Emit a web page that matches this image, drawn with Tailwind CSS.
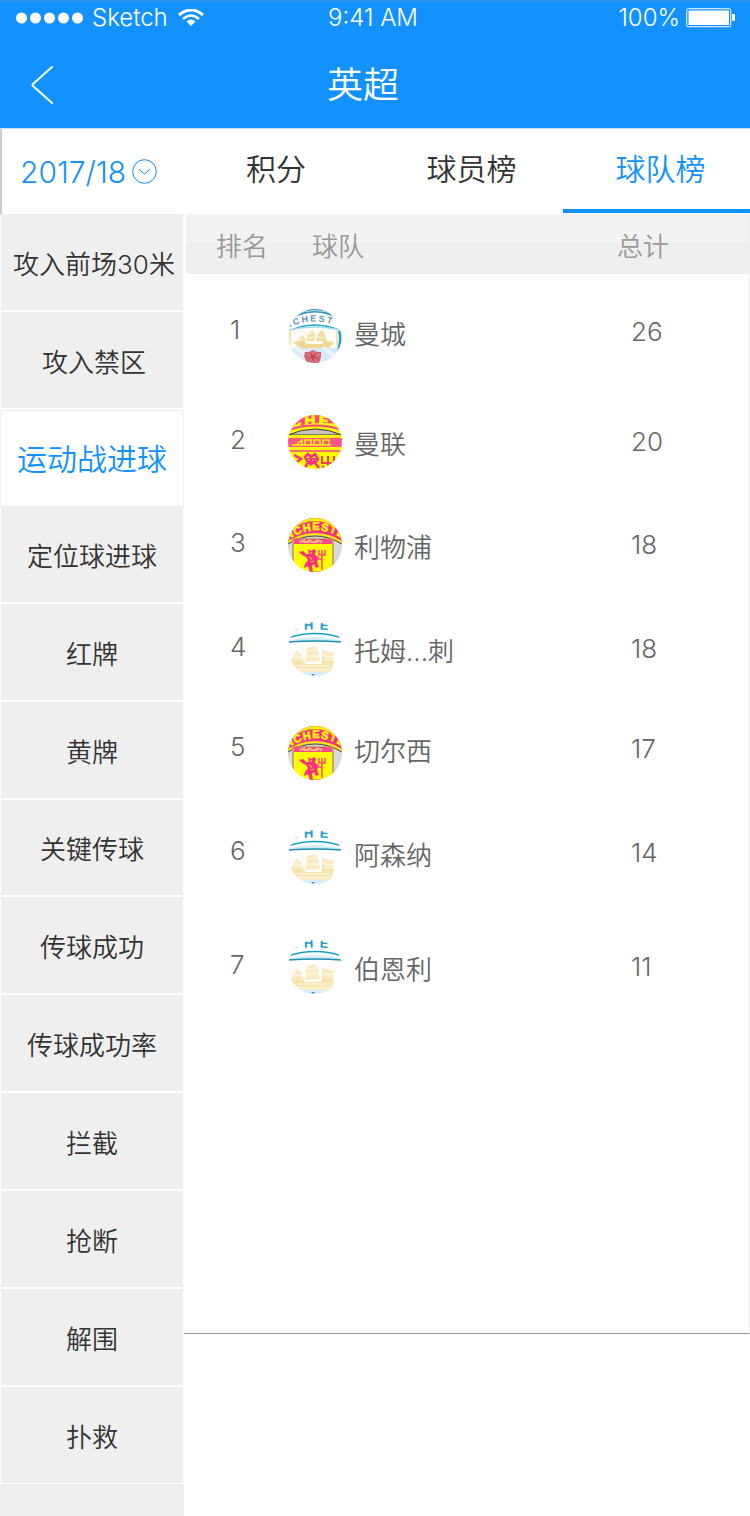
<!DOCTYPE html>
<html lang="zh-CN">
<head>
<meta charset="utf-8">
<meta name="viewport" content="width=device-width, initial-scale=1">
<title>英超</title>
<script src="https://cdn.jsdelivr.net/npm/@tailwindcss/browser@4"></script>
</head>
<body class="flex min-h-screen flex-col bg-white font-['Inter','Noto_Sans_CJK_SC',sans-serif] font-[350] text-[#333]">

<!-- Shared badge drawings -->
<svg class="absolute size-0" aria-hidden="true">
  <defs>
    <path id="arcCity" d="M-2 20Q27 5 56 20"/>
    <path id="arcCityBig" d="M-4 11Q27 4 60 11"/>
    <path id="arcUnited" d="M-3 24Q27 2 57 22"/>
    <path id="arcUnitedBig" d="M-4 14Q27 6 64 16"/>
    <g id="ship">
      <path d="M8 33L12 29L14 26L17 29L17 33ZM18 32L20 26L24 21L27 25L26 32ZM28 32L30 25L34 20L38 27L39 33Z" fill="#f6dda0"/>
      <path d="M5 33H17L19 35H34L36 32L46 33L41 39H12Z" fill="#f1d78f"/>
      <path d="M10 31L15 30M20 29L26 28M30 28L38 29M21 25L25 24" stroke="#fffaf0" stroke-width="1" fill="none"/>
    </g>
    <symbol id="city" viewBox="0 0 54 54">
      <path d="M0 0H54V54H0Z" fill="#fff"/>
      <path d="M0 12Q27 -5 54 12V6Q27 -12 0 6Z" fill="#2c93b8"/>
      <path d="M6 6Q27 -3 48 6" stroke="#b8e3f3" stroke-width="1" fill="none"/>
      <text font-size="9" font-weight="700" font-family="Liberation Sans" fill="#5d93ba" letter-spacing="2"><textPath href="#arcCity">NCHEST</textPath></text>
      <path d="M1 22Q27 10 53 22" stroke="#17a0c9" stroke-width="1.5" fill="none"/>
      <path d="M0 21Q27 14 53 21L51 41Q47 54 27 54Q6 54 1 40Z" fill="#fffdf6"/>
      <path d="M1 21Q27 15 52 21" stroke="#9edaf0" stroke-width="1.5" fill="none"/>
      <path d="M51 22Q54 30 50 42" stroke="#17a0c9" stroke-width="2.500" fill="none"/>
      <path d="M2 22V37M49 22V39" stroke="#f1dca0" stroke-width="1.500"/>
      <use href="#ship"/>
      <path d="M1 39H50Q46 54 27 54Q5 54 1 39Z" fill="#d5e9f8"/>
      <path d="M2 43L18 54M7 38L19 46M35 38L47 48" stroke="#e9f4fc" stroke-width="4"/>
      <path d="M25 41L29 43L33 43L33 48L31 54H19L16 47L17 43L21 43Z" fill="#d5626f"/>
      <circle cx="25" cy="48" r="3" fill="#bf4858"/>
      <path d="M25 42V46M18 45L23 47M32 45L27 47M21 53L24 49M29 53L26 49" stroke="#e88b95" stroke-width="1"/>
    </symbol>
    <symbol id="cityBig" viewBox="0 0 54 54">
      <path d="M0 0H54V54H0Z" fill="#fff"/>
      <text font-size="13" font-weight="700" font-family="Liberation Sans" fill="#17a0c9" letter-spacing="6"><textPath href="#arcCityBig" startOffset="5">CHES</textPath></text>
      <path d="M0 16Q27 7 54 16" stroke="#12a0c8" stroke-width="1.500" fill="none"/>
      <path d="M0 19Q27 11 54 19V20H0Z" fill="#d3eefa"/>
      <path d="M0 20Q27 18 54 20" stroke="#238eb0" stroke-width="1.500" fill="none"/>
      <path d="M1 40L5 35L7 31L13 31L16 40ZM6 30L10 29L12 32ZM17 40L18 32L19 26L27 24L30 28L31 33L32 39ZM33 39Q36 36 35 28L47 31Q44 35 46 40Z" fill="#faebc4"/>
      <path d="M2 40H15L18 42H33L35 39H46L44 47H9Z" fill="#f7e3ae"/>
      <path d="M5 35L14 36M18 29L29 28M17 34L31 34M36 34L44 35M10 44H42" stroke="#fffaf0" stroke-width="1"/>
      <path d="M35 28V42M10 36V43" stroke="#f3dda4" stroke-width="1"/>
      <path d="M7 46H46L43 50H10Z" fill="#fbedc5"/>
      <path d="M9 50H45L35 54H20Z" fill="#d9edfa"/>
      <path d="M23 52H27L25 54Z" fill="#3f91cc"/>
    </symbol>
    <symbol id="united" viewBox="0 0 54 54">
      <path d="M0 0H54V54H0Z" fill="#d8d8d8"/>
      <path d="M0 0H54V25Q27 9 0 25Z" fill="#ff2f82"/>
      <path d="M3 10Q27 -7 51 10" stroke="#fff000" stroke-width="3" fill="none"/>
      <text font-size="11" font-weight="700" font-family="Liberation Sans" fill="#fff600" stroke="#fff600" stroke-width=".6" letter-spacing="1"><textPath href="#arcUnited" startOffset="3">NCHESTE</textPath></text>
      <path d="M0 24Q27 8 54 24" stroke="#fff000" stroke-width="2" fill="none"/>
      <path d="M0 26Q27 10 54 26" stroke="#4b412c" stroke-width="1" fill="none"/>
      <path d="M5 21H45V54H5Z" fill="#fffb00" stroke="#b59b57" stroke-width="1.5"/>
      <path d="M6 21H44V26H6Z" fill="#ff4c89"/>
      <path d="M12 24L16 22V24H21V22L24 24H29V22L34 24" stroke="#ffd07a" stroke-width="1.500" fill="none"/>
      <path d="M11 34L15 33L18 36L21 36L20 31L23 33L26 31L28 33L27 37L31 39L29 44L31 49L28 50L26 46L24 48L25 54H22L20 48L16 50L17 46L20 42L18 39L14 37Z" fill="#ff2f82"/>
      <path d="M31 32V37H37V32M34 32V52M29 40L34 42" stroke="#ff4c70" stroke-width="1.5" fill="none"/>
      <path d="M21 39L24 41M22 35H24M23 44L26 43" stroke="#fffb00" stroke-width="1"/>
    </symbol>
    <symbol id="unitedBig" viewBox="0 0 54 54">
      <path d="M0 0H54V54H0Z" fill="#fff900"/>
      <path d="M5 0H49V9Q27 6 2 13Z" fill="#ff4386"/>
      <text font-size="15" font-weight="700" font-family="Liberation Sans" fill="#fff900" stroke="#fff900" stroke-width="1" letter-spacing="3"><textPath href="#arcUnitedBig" startOffset="7">CHES</textPath></text>
      <path d="M0 15Q27 6 54 15" stroke="#ff4386" stroke-width="2" fill="none"/>
      <path d="M0 20Q27 8 54 20Z" fill="#c7c3b8" stroke="#3d382d" stroke-width="1"/>
      <path d="M0 20H54V22H0Z" fill="#fff000"/>
      <path d="M0 23H54V32H0Z" fill="#ff5588"/>
      <path d="M4 30H43M8 30L14 25V30M17 30V25H23V30M26 30V25H32V30M35 30V25H41V30" stroke="#fff600" stroke-width="1.5" fill="none"/>
      <path d="M0 36H54" stroke="#ff4386" stroke-width="1.5"/>
      <path d="M6 40L13 44L9 47M17 53L20 47L17 42L20 39L23 42L27 39L30 44L27 48L31 53" stroke="#ff2f82" stroke-width="2.5" fill="none"/>
      <path d="M18 43H28V47L23 51L19 48Z" fill="#ff2f82"/>
      <path d="M20 44L22 46M26 44L24 46" stroke="#fff900"/>
      <path d="M34 41V48H46V41M40 41V53M34 51L38 54" stroke="#ef4353" stroke-width="2" fill="none"/>
    </symbol>
  </defs>
</svg>

<header class="h-32 border-t border-[#3d8fdb] bg-[#1291ff] text-white">
  <div class="grid h-[34px] grid-cols-[1fr_auto_1fr] items-center pr-[14px] pl-4 text-2xl leading-[34px] font-light">
    <div class="flex items-center">
      <svg class="h-3 w-[68px]" viewBox="0 0 68 12" fill="#fff" aria-hidden="true"><circle cx="5.5" cy="6" r="5.5"/><circle cx="19.5" cy="6" r="5.5"/><circle cx="33.5" cy="6" r="5.5"/><circle cx="47.5" cy="6" r="5.5"/><circle cx="61.5" cy="6" r="5.5"/></svg>
      <span class="ml-2">Sketch</span>
      <svg class="ml-[10px] h-[18px] w-[26px]" viewBox="0 0 26 18" fill="none" stroke="#fff" aria-hidden="true"><path d="M1 6Q13 -4 25 6" stroke-width="3"/><path d="M5 10Q13 3 21 10" stroke-width="2.5"/><path d="M8.500 12.500Q13 8.500 17.500 12.500L13 17Z" fill="#fff" stroke="none"/></svg>
    </div>
    <span class="pr-[6px]">9:41 AM</span>
    <div class="flex items-center justify-end">
      <span>100%</span>
      <svg class="ml-[6px] h-5 w-[50px]" viewBox="0 0 50 20" aria-hidden="true"><rect x=".75" y=".75" width="44" height="18" rx="1.500" fill="none" stroke="#fff" stroke-width="1"/><rect x="2.500" y="2.500" width="40.500" height="14.500" fill="#fff"/><path d="M46 6H48Q49 6 49 7V12Q49 13 48 13H46Z" fill="#fff"/></svg>
    </div>
  </div>
  <div class="grid h-[93px] grid-cols-[1fr_auto_1fr] items-center pt-[6px] pr-[54px] pl-[30px]">
    <a href="#" aria-label="返回"><svg class="h-10 w-6" viewBox="0 0 24 40" fill="none" stroke="#fff" stroke-width="2" stroke-linecap="round" stroke-linejoin="round"><path d="M22 2L3 19Q2 20 3 21L22 38"/></svg></a>
    <h1 class="text-4xl leading-10">英超</h1>
  </div>
</header>

<nav class="flex h-[86px] border-t border-[#c3e2fd]">
  <div class="flex w-[184px] shrink-0 items-center border-l-2 border-[#ccc] pl-[18px] text-[#1291ff]">
    <label for="season" class="sr-only">赛季</label>
    <select id="season" class="h-14 w-[112px] appearance-none overflow-visible bg-transparent p-0 text-3xl leading-[56px]"><option>2017/18</option></select>
    <svg class="size-[25px] shrink-0" viewBox="0 0 25 25" fill="none" stroke="#1291ff" aria-hidden="true"><circle cx="12.500" cy="12.500" r="11.800"/><path d="M7 10L12.500 15L18 10"/></svg>
  </div>
  <div class="grid flex-1 grid-cols-[184px_1fr_187px] pb-px text-3xl">
    <button class="border-b-4 border-transparent">积分</button>
    <button class="border-b-4 border-transparent pl-3">球员榜</button>
    <button class="border-b-4 border-[#1291ff] pl-2 text-[#1291ff]">球队榜</button>
  </div>
</nav>

<main class="flex flex-1 items-stretch">
  <aside class="flex w-[184px] shrink-0 flex-col text-[26px]">
    <button class="h-[98px] border-x border-b-2 border-white bg-[#efefef] pt-1 pl-1">攻入前场30米</button>
    <button class="h-[98px] border-x border-b-2 border-white bg-[#efefef] pt-1 pl-1">攻入禁区</button>
    <button class="h-[97px] border border-[#efefef] bg-white text-3xl text-[#1291ff]">运动战进球</button>
    <button class="h-[97px] border-x border-b-2 border-white bg-[#efefef] pt-1">定位球进球</button>
    <button class="h-[98px] border-x border-b-2 border-white bg-[#efefef] pt-1">红牌</button>
    <button class="h-[98px] border-x border-b-2 border-white bg-[#efefef] pt-1">黄牌</button>
    <button class="h-[97px] border-x border-b-2 border-white bg-[#efefef] pt-1">关键传球</button>
    <button class="h-[98px] border-x border-b-2 border-white bg-[#efefef] pt-1">传球成功</button>
    <button class="h-[98px] border-x border-b-2 border-white bg-[#efefef] pt-1">传球成功率</button>
    <button class="h-[98px] border-x border-b-2 border-white bg-[#efefef] pt-1">拦截</button>
    <button class="h-[98px] border-x border-b-2 border-white bg-[#efefef] pt-1">抢断</button>
    <button class="h-[98px] border-x border-b-2 border-white bg-[#efefef] pt-1">解围</button>
    <button class="h-[97px] border-x border-b border-white bg-[#efefef] pt-1">扑救</button>
    <div class="flex-1 bg-[#efefef]"></div>
  </aside>

  <section class="min-h-[1120px] flex-1 self-start border-r border-b border-r-[#eee] border-b-[#999]">
    <table class="w-full table-fixed border-separate border-spacing-0 text-left text-[26px] text-[#666]">
      <colgroup><col class="w-[104px]"><col><col class="w-[150px]"></colgroup>
      <thead>
        <tr class="h-[60px] bg-linear-to-b from-[#f3f3f3] from-45% to-[#efefef] to-50% leading-9 text-[#999]">
          <th class="border-l-2 border-white p-0 pt-[6px] pl-[30px] font-[350]">排名</th>
          <th class="p-0 pt-[6px] pl-6 font-[350]">球队</th>
          <th class="p-0 pt-[6px] pl-[18px] font-[350]">总计</th>
        </tr>
      </thead>
      <tbody>
        <tr class="h-[116px]">
          <td class="p-0 pb-[6px] pl-[46px]">1</td>
          <td class="p-0"><div class="flex items-center gap-3 pt-2"><svg class="size-[54px] rounded-full" aria-hidden="true"><use href="#city"/></svg><span class="pb-1">曼城</span></div></td>
          <td class="p-0 pb-[2px] pl-8">26</td>
        </tr>
        <tr class="h-[104px]">
          <td class="p-0 pb-[6px] pl-[46px]">2</td>
          <td class="p-0"><div class="flex items-center gap-3"><svg class="size-[54px] rounded-full" aria-hidden="true"><use href="#unitedBig"/></svg><span class="pt-1">曼联</span></div></td>
          <td class="p-0 pb-[2px] pl-8">20</td>
        </tr>
        <tr class="h-[102px]">
          <td class="p-0 pb-[6px] pl-[46px]">3</td>
          <td class="p-0"><div class="flex items-center gap-3"><svg class="size-[54px] rounded-full" aria-hidden="true"><use href="#united"/></svg><span class="pt-1">利物浦</span></div></td>
          <td class="p-0 pb-[2px] pl-8">18</td>
        </tr>
        <tr class="h-[106px]">
          <td class="p-0 pb-[6px] pl-[46px]">4</td>
          <td class="p-0"><div class="flex items-center gap-3"><svg class="size-[54px] rounded-full" aria-hidden="true"><use href="#cityBig"/></svg><span class="pt-1">托姆...刺</span></div></td>
          <td class="p-0 pb-[2px] pl-8">18</td>
        </tr>
        <tr class="h-[94px]">
          <td class="p-0 pb-[6px] pl-[46px]">5</td>
          <td class="p-0"><div class="flex items-center gap-3 pt-2"><svg class="size-[54px] rounded-full" aria-hidden="true"><use href="#united"/></svg><span class="pb-1">切尔西</span></div></td>
          <td class="p-0 pb-[2px] pl-8">17</td>
        </tr>
        <tr class="h-[114px]">
          <td class="p-0 pb-[6px] pl-[46px]">6</td>
          <td class="p-0"><div class="flex items-center gap-3 pt-2"><svg class="size-[54px] rounded-full" aria-hidden="true"><use href="#cityBig"/></svg><span class="pb-1">阿森纳</span></div></td>
          <td class="p-0 pb-[2px] pl-8">14</td>
        </tr>
        <tr class="h-[114px]">
          <td class="p-0 pb-[6px] pl-[46px]">7</td>
          <td class="p-0"><div class="flex items-center gap-3"><svg class="size-[54px] rounded-full" aria-hidden="true"><use href="#cityBig"/></svg><span class="pt-1">伯恩利</span></div></td>
          <td class="p-0 pb-[2px] pl-8">11</td>
        </tr>
      </tbody>
    </table>
  </section>
</main>
</body>
</html>
